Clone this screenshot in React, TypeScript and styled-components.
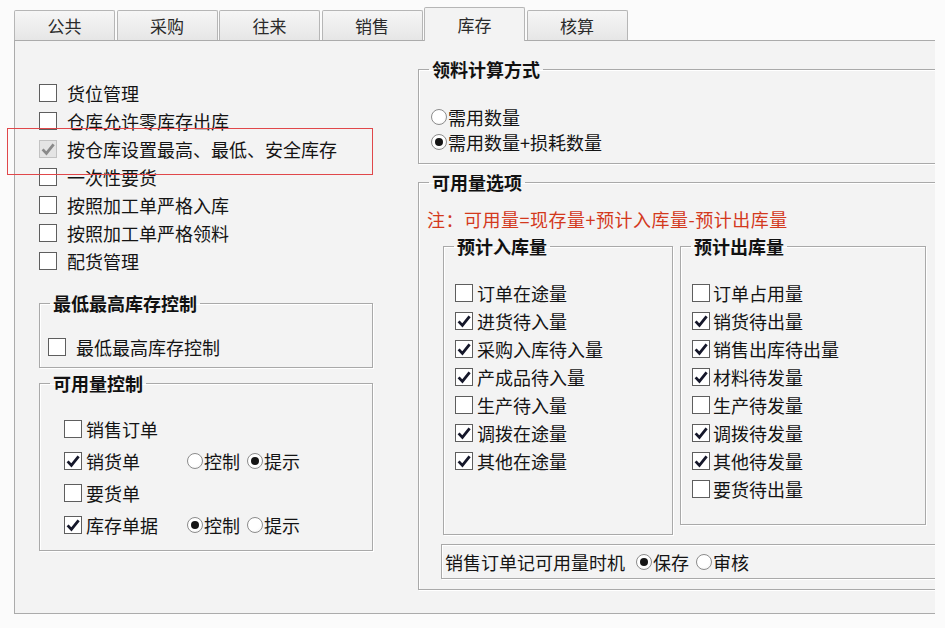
import React from "react";
import styled, { createGlobalStyle } from "styled-components";

const GlobalStyle = createGlobalStyle`
  body {
    margin: 0;
    background: #fbfbfb;
    color: #141414;
    font-family: "Noto Sans CJK SC", "Noto Sans", sans-serif;
  }
`;

const tabs = ["公共", "采购", "往来", "销售", "库存", "核算"];

const generalOptions = [
	{ label: "货位管理" },
	{ label: "仓库允许零库存出库" },
	{ label: "按仓库设置最高、最低、安全库存", checked: true, disabled: true },
	{ label: "一次性要货" },
	{ label: "按照加工单严格入库" },
	{ label: "按照加工单严格领料" },
	{ label: "配货管理" },
];

const controlOptions = [
	{ label: "销售订单", checked: false },
	{ label: "销货单", checked: true, mode: "提示" },
	{ label: "要货单", checked: false },
	{ label: "库存单据", checked: true, mode: "控制" },
];

const incoming = [
	{ label: "订单在途量", checked: false },
	{ label: "进货待入量", checked: true },
	{ label: "采购入库待入量", checked: true },
	{ label: "产成品待入量", checked: true },
	{ label: "生产待入量", checked: false },
	{ label: "调拨在途量", checked: true },
	{ label: "其他在途量", checked: true },
];

const outgoing = [
	{ label: "订单占用量", checked: false },
	{ label: "销货待出量", checked: true },
	{ label: "销售出库待出量", checked: true },
	{ label: "材料待发量", checked: true },
	{ label: "生产待发量", checked: false },
	{ label: "调拨待发量", checked: true },
	{ label: "其他待发量", checked: true },
	{ label: "要货待出量", checked: false },
];

const Check = ({ checked, disabled }: { checked?: boolean; disabled?: boolean }) => (
	<Box $disabled={disabled}>
		{checked && (
			<svg width="16" height="16" viewBox="0 0 16 16">
				<path
					d="M2.6 8.4 L6.4 12.4 L13.6 3.4"
					fill="none"
					stroke={disabled ? "#8a8a8a" : "#15172a"}
					strokeWidth="2.8"
				/>
			</svg>
		)}
	</Box>
);

const Radio = ({ label, on }: { label: string; on?: boolean }) => (
	<RadioItem>
		<Circle>{on && <Dot />}</Circle>
		{label}
	</RadioItem>
);

const App = () => {
	return (
		<>
			<GlobalStyle />
			<Frame>
				<TabBar>
					{tabs.map((t) => (
						<Tab key={t} $active={t === "库存"}>{t}</Tab>
					))}
				</TabBar>
				<Panel>
					<LeftColumn>
						<List>
							{generalOptions.map((o) => (
								<Option key={o.label} $h={28} $gap={10}>
									<Check checked={o.checked} disabled={o.disabled} />
									{o.label}
								</Option>
							))}
						</List>

						<Group style={{ marginTop: 17 }}>
							<Legend>最低最高库存控制</Legend>
							<GroupBody $pad="21px 0 8px 8px">
								<Option $h={24} $gap={10}>
									<Check />
									最低最高库存控制
								</Option>
							</GroupBody>
						</Group>

						<Group style={{ marginTop: 4 }}>
							<Legend>可用量控制</Legend>
							<GroupBody $pad="19px 0 9px 24px">
								{controlOptions.map((o) => (
									<ControlRow key={o.label}>
										<Option $h={32} $gap={4}>
											<Check checked={o.checked} />
											{o.label}
										</Option>
										{o.mode && (
											<RadioPair>
												<Radio label="控制" on={o.mode === "控制"} />
												<Radio label="提示" on={o.mode === "提示"} />
											</RadioPair>
										)}
									</ControlRow>
								))}
							</GroupBody>
						</Group>
					</LeftColumn>

					<RightColumn>
						<Group>
							<Legend>领料计算方式</Legend>
							<GroupBody $pad="24px 0 9px 12px">
								<RadioLine><Radio label="需用数量" /></RadioLine>
								<RadioLine><Radio label="需用数量+损耗数量" on /></RadioLine>
							</GroupBody>
						</Group>

						<Group style={{ marginTop: 7 }}>
							<Legend>可用量选项</Legend>
							<GroupBody $pad="15px 0 10px 0">
								<Note>注：可用量=现存量+预计入库量-预计出库量</Note>
								<SubRow>
									<SubGroup $w={230} $h={300}>
										<Legend>预计入库量</Legend>
										<GroupBody $pad="22px 0 0 11px">
											{incoming.map((o) => (
												<Option key={o.label} $h={28} $gap={4}>
													<Check checked={o.checked} />
													{o.label}
												</Option>
											))}
										</GroupBody>
									</SubGroup>
									<SubGroup $w={246} $h={290}>
										<Legend>预计出库量</Legend>
										<GroupBody $pad="22px 0 0 11px">
											{outgoing.map((o) => (
												<Option key={o.label} $h={28} $gap={3}>
													<Check checked={o.checked} />
													{o.label}
												</Option>
											))}
										</GroupBody>
									</SubGroup>
								</SubRow>
								<TimingBar>
									<span>销售订单记可用量时机</span>
									<RadioPair>
										<Radio label="保存" on />
										<Radio label="审核" />
									</RadioPair>
								</TimingBar>
							</GroupBody>
						</Group>
					</RightColumn>
				</Panel>
				<Highlight />
			</Frame>
		</>
	);
};

const Frame = styled.div`
  position: relative;
  width: 935px;
  height: 628px;
  overflow: hidden;
  padding: 7px 0 0 14px;
  box-sizing: border-box;
`;

const TabBar = styled.div`
  position: relative;
  z-index: 1;
  display: flex;
  align-items: flex-end;
  gap: 1.5px;
  height: 33px;
`;

const Tab = styled.div<{ $active?: boolean }>`
  width: 101px;
  height: ${(p) => (p.$active ? 34 : 30)}px;
  margin-bottom: ${(p) => (p.$active ? -1 : 0)}px;
  box-sizing: border-box;
  border: 1px solid #b6b6b6;
  border-bottom: none;
  border-radius: 2px 2px 0 0;
  background: ${(p) => (p.$active ? "#f3f3f3" : "linear-gradient(#f6f6f6, #e6e6e6)")};
  display: flex;
  align-items: center;
  justify-content: center;
  font-size: 17px;
  color: #2a2a2a;
`;

const Panel = styled.div`
  width: 960px;
  height: 574px;
  box-sizing: border-box;
  border: 1px solid #ababab;
  background: #f3f3f3;
  display: flex;
`;

const LeftColumn = styled.div`
  width: 403px;
  flex: none;
  box-sizing: border-box;
  padding: 38px 0 0 24px;
  display: flex;
  flex-direction: column;
  align-items: flex-start;
`;

const RightColumn = styled.div`
  flex: 1;
  padding-top: 17px;
  display: flex;
  flex-direction: column;
`;

const List = styled.div`
  display: flex;
  flex-direction: column;
`;

const Option = styled.div<{ $h: number; $gap: number }>`
  display: flex;
  align-items: center;
  height: ${(p) => p.$h}px;
  gap: ${(p) => p.$gap}px;
  font-size: 18px;
  white-space: nowrap;
`;

const Box = styled.span<{ $disabled?: boolean }>`
  width: 18px;
  height: 18px;
  flex: none;
  box-sizing: border-box;
  border: 1px solid ${(p) => (p.$disabled ? "#c2c2c2" : "#5e5e5e")};
  background: ${(p) => (p.$disabled ? "#e4e4e4" : "#fff")};
  display: flex;
  align-items: center;
  justify-content: center;
`;

const Group = styled.fieldset`
  margin: 0;
  padding: 0;
  min-width: 0;
  width: 334px;
  box-sizing: border-box;
  border: 1px solid #a9a9a9;
  box-shadow: 1px 1px 0 #fff, inset 1px 1px 0 #fff;

  ${RightColumn} > & {
    width: auto;
  }
`;

const SubGroup = styled(Group)<{ $w: number; $h: number }>`
  width: ${(p) => p.$w}px;
  height: ${(p) => p.$h}px;
  flex: none;
`;

const Legend = styled.legend`
  margin-left: 10px;
  padding: 0 3px;
  font-size: 18px;
  line-height: 22px;
  font-weight: 700;
  color: #111;
`;

const GroupBody = styled.div<{ $pad: string }>`
  padding: ${(p) => p.$pad};
`;

const ControlRow = styled.div`
  display: grid;
  grid-template-columns: 123px auto;
  align-items: center;
`;

const RadioPair = styled.div`
  display: flex;
  align-items: center;
  gap: 7px;
`;

const RadioItem = styled.span`
  display: inline-flex;
  align-items: center;
  gap: 1px;
  font-size: 18px;
  white-space: nowrap;
`;

const Circle = styled.span`
  width: 16px;
  height: 16px;
  flex: none;
  box-sizing: border-box;
  border-radius: 50%;
  border: 1px solid #8c8c8c;
  background: radial-gradient(circle at 40% 35%, #fff 55%, #ececec);
  display: flex;
  align-items: center;
  justify-content: center;
`;

const Dot = styled.span`
  width: 8px;
  height: 8px;
  border-radius: 50%;
  background: #151515;
`;

const RadioLine = styled.div`
  height: 25px;
  display: flex;
  align-items: center;
`;

const Note = styled.div`
  padding-left: 8px;
  line-height: 22px;
  font-size: 18px;
  letter-spacing: 0.5px;
  color: #d3391d;
  white-space: nowrap;
`;

const SubRow = styled.div`
  display: flex;
  align-items: flex-start;
  gap: 7px;
  margin: 5px 0 0 24px;
`;

const TimingBar = styled.div`
  margin: 9px 0 0 22px;
  height: 35px;
  box-sizing: border-box;
  border: 1px solid #a9a9a9;
  box-shadow: 1px 1px 0 #fff, inset 1px 1px 0 #fff;
  padding-left: 3px;
  display: flex;
  align-items: center;
  gap: 11px;
  font-size: 18px;
  white-space: nowrap;
`;

const Highlight = styled.div`
  position: absolute;
  left: 7px;
  top: 128px;
  width: 366px;
  height: 47px;
  box-sizing: border-box;
  border: 1.5px solid #e0474a;
  pointer-events: none;
`;

export default App;
